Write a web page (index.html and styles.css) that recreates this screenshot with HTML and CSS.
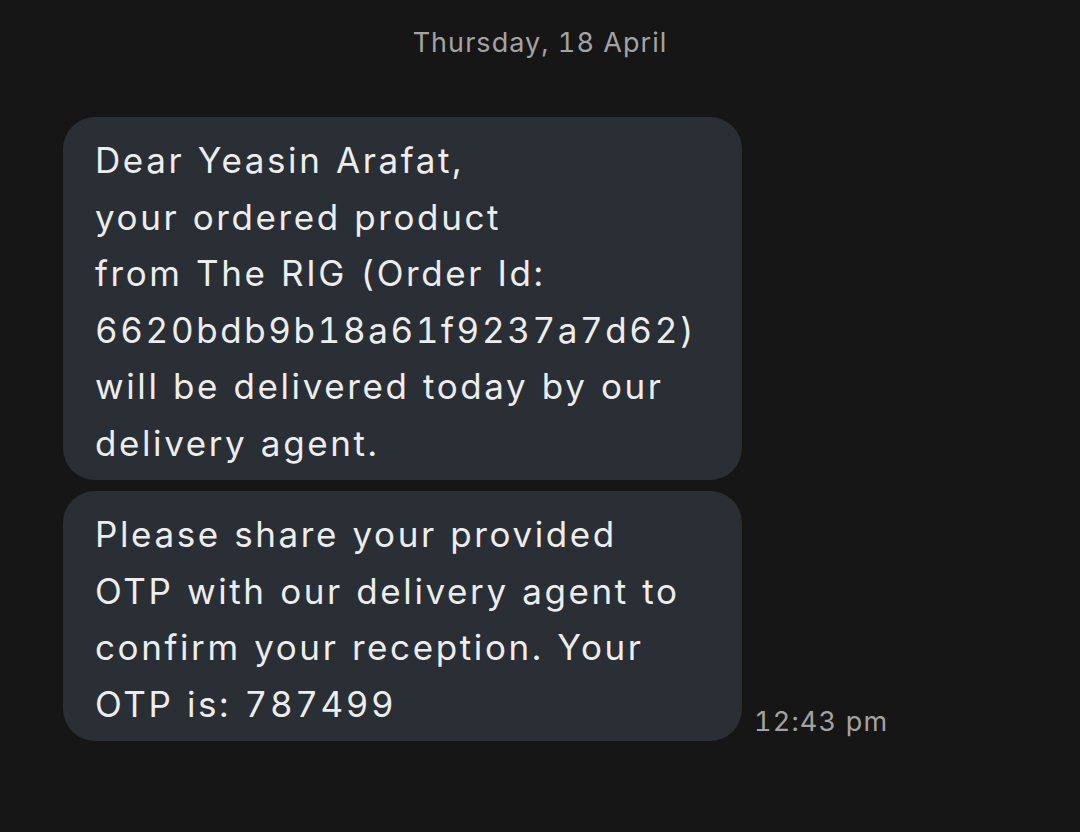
FILE: index.html
```html
<!DOCTYPE html>
<html lang="en">
<head>
<meta charset="utf-8">
<title>Messages</title>
<link rel="stylesheet" href="styles.css">
</head>
<body>
<main class="thread">
  <div class="date">Thursday, 18 April</div>
  <div class="group">
    <div class="row">
      <div class="bubble">Dear Yeasin Arafat,<br>your ordered product<br>from The RIG (Order Id:<br>6620bdb9b18a61f9237a7d62)<br>will be delivered today by our<br>delivery agent.</div>
    </div>
    <div class="row">
      <div class="bubble">Please share your provided<br>OTP with our delivery agent to<br>confirm your reception. Your<br>OTP is: 787499</div>
      <div class="time">12:43 pm</div>
    </div>
  </div>
</main>
</body>
</html>
```

FILE: styles.css
```css
html, body {
  margin: 0;
  padding: 0;
  background: #161616;
  height: 100%;
}
body {
  font-family: Inter, Roboto, "Noto Sans", Arial, sans-serif;
  color: #ececec;
  font-variant-numeric: tabular-nums;
}
.thread {
  width: 1080px;
  height: 832px;
  box-sizing: border-box;
  padding: 0 0 0 63px;
}
.date {
  margin-left: -63px;
  text-align: center;
  font-size: 27px;
  line-height: 34px;
  letter-spacing: 1.05px;
  color: #a3a3a3;
  padding-top: 26px;
  height: 117px;
  box-sizing: border-box;
}
.group {
  display: flex;
  flex-direction: column;
  gap: 11px;
}
.row {
  display: flex;
  align-items: flex-end;
  gap: 12px;
}
.bubble {
  width: 679px;
  box-sizing: border-box;
  background: #2a2f36;
  border-radius: 32px;
  padding: 15px 10px 9px 32px;
  font-size: 35px;
  line-height: 56.5px;
  letter-spacing: 2.6px;
  word-spacing: 1.5px;
  color: #ededed;
}
.time {
  font-size: 27px;
  line-height: 34px;
  letter-spacing: 1.2px;
  color: #a3a3a3;
  padding-bottom: 2px;
}
```
